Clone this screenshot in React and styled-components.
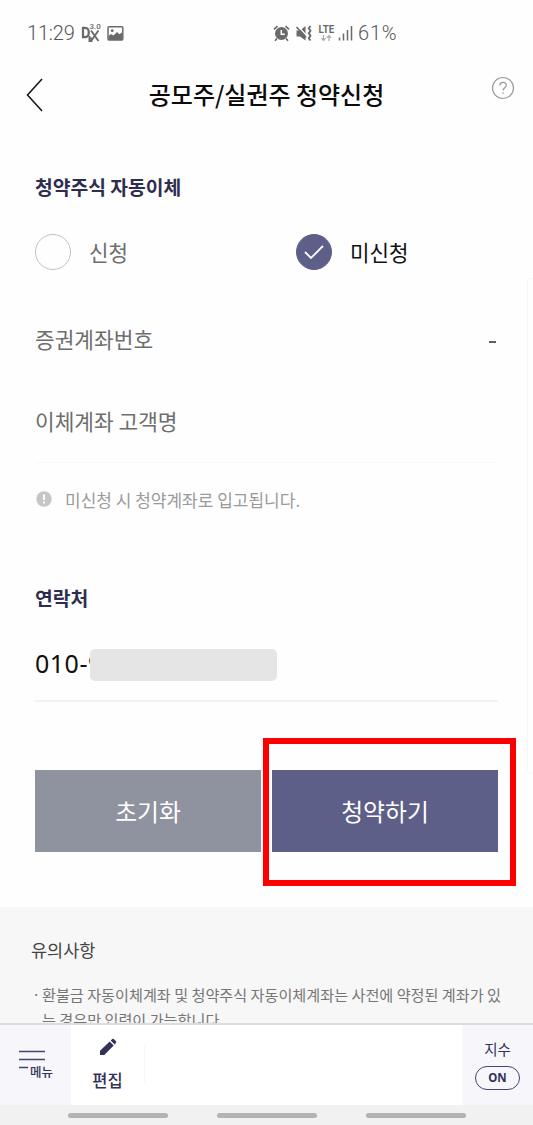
import {useState} from 'react';
import styled, { createGlobalStyle, css } from 'styled-components';

const GlobalStyle = createGlobalStyle`
  * {
    box-sizing: border-box;
  }

  body {
    margin: 0;
    background-color: #fefefe;
    font-family: "Noto Sans CJK KR", sans-serif;
  }

  button {
    font-family: inherit;
    border: none;
    padding: 0;
    background: none;
    cursor: pointer;
  }
`;

const Container = styled.div`
  position: relative;
  display: flex;
  flex-direction: column;
  width: 533px;
  height: 1125px;
  overflow: hidden;
  background-color: #fefefe;
`;

const StatusBar = styled.div`
  display: flex;
  align-items: center;
  height: 66px;
  padding: 0 27px;
  color: #6a6a6a;
`;

const StatusGroup = styled.div`
  display: flex;
  align-items: center;
  width: ${props => props.$width};
`;

const StatusText = styled.span`
  font-family: Roboto, sans-serif;
  font-size: 20px;
  font-weight: 300;
  line-height: 24px;
  letter-spacing: ${props => props.$spacing || "0"};
  color: #555;
`;

const StatusIcon = styled.svg`
  display: block;
  flex: none;
  margin-left: ${props => props.$gap || "0"};
`;

const Header = styled.header`
  display: grid;
  grid-template-columns: 60px 1fr 60px;
  align-items: center;
  height: 58px;
`;

const BackButton = styled.button`
  display: flex;
  padding-left: 26px;
`;

const HelpButton = styled.button`
  display: flex;
  margin: -14px 0 0 18px;
`;

const Title = styled.h1`
  margin: -2px 0 0;
  font-size: 24px;
  font-weight: 500;
  line-height: 36px;
  text-align: center;
  white-space: nowrap;
  color: #0b0b0b;
`;

const Form = styled.main`
  display: flex;
  flex-direction: column;
  height: 783px;
  padding: 48px 35px 0;
`;

const Heading = styled.h2`
  margin: 0;
  font-size: 19.3px;
  font-weight: 700;
  line-height: 30px;
  color: #2e2d4f;
`;

const Options = styled.div`
  display: grid;
  grid-template-columns: 261px 1fr;
  margin-top: 32px;
`;

const Option = styled.button`
  display: flex;
  align-items: center;
  gap: 18px;
  height: 36px;
  font-size: 21.2px;
  line-height: 34px;
  color: ${props => props.$checked ? "#111" : "#6e6e6e"};
`;

const Radio = styled.span`
  display: flex;
  align-items: center;
  justify-content: center;
  width: 36px;
  height: 36px;
  border-radius: 50%;
  border: 1px solid #c2c2c2;
  ${props => props.$checked && css`
    border-color: #5d5f88;
    background-color: #5d5f88;
  `}
`;

const Field = styled.div`
  display: flex;
  align-items: center;
  justify-content: space-between;
  height: 40px;
  margin-top: ${props => props.$top};
  font-size: 21.4px;
  line-height: 40px;
  color: #6e6e6e;
`;

const FieldLabel = styled.span`
  padding-bottom: 4px;
`;

const Dash = styled.span`
  width: 7px;
  height: 2px;
  margin: 2px 2px 0 0;
  background-color: #606060;
`;

const Divider = styled.div`
  flex: none;
  height: ${props => props.$strong ? "2px" : "1px"};
  margin-top: ${props => props.$strong ? "18px" : "19px"};
  background-color: ${props => props.$strong ? "#f1f1f1" : "#f8f8f8"};
`;

const Hint = styled.p`
  display: flex;
  align-items: center;
  gap: 13px;
  height: 30px;
  margin: 22px 0 68px;
  padding-left: 1px;
  font-size: 17px;
  line-height: 30px;
  color: #9a9a9a;
`;

const HintIcon = styled(StatusIcon)`
  margin-top: -3px;
`;

const Phone = styled.div`
  display: flex;
  align-items: center;
  height: 34px;
  margin-top: 35px;
`;

const PhoneText = styled.span`
  flex: none;
  width: 55px;
  padding-bottom: 4px;
  white-space: nowrap;
  font-family: "Noto Sans", sans-serif;
  font-size: 25px;
  line-height: 34px;
  letter-spacing: 0.5px;
  color: #111;
`;

/* covers the digits that follow the prefix */
const Mask = styled.span`
  position: relative;
  width: 187px;
  height: 32px;
  border-radius: 5px;
  background-color: #e5e5e5;
`;

const Actions = styled.div`
  display: grid;
  grid-template-columns: 226px 226px;
  gap: 11px;
  margin-top: 68px;
`;

const ActionWrapper = styled.div`
  position: relative;
`;

const Action = styled.button`
  display: block;
  width: 100%;
  height: 82px;
  font-size: 23.8px;
  line-height: 82px;
  color: #fff;
  background-color: ${props => props.$primary ? "#5d5f88" : "#8f929f"};
`;

const Highlight = styled.div`
  position: absolute;
  top: -32px;
  left: -9px;
  width: 253px;
  height: 148px;
  border: 6px solid #fe0000;
  pointer-events: none;
`;

const Notice = styled.section`
  flex: 1;
  min-height: 0;
  overflow: hidden;
  padding: 30px 24px 0 31px;
  background-color: #f7f7f7;
`;

const NoticeTitle = styled.h3`
  margin: 0 0 19px;
  font-size: 17.5px;
  font-weight: 400;
  line-height: 26px;
  color: #444;
`;

const NoticeText = styled.p`
  display: flex;
  margin: 0;
  font-size: 15.15px;
  line-height: 25px;
  color: #757575;
`;

const Bullet = styled.span`
  flex: none;
  width: 11px;
  padding-left: 1px;
`;

const BottomNav = styled.nav`
  display: flex;
  flex: none;
  height: 82px;
  border-top: 2px solid #dcdcdc;
  background-color: #fff;
  color: #32315a;
`;

const MenuButton = styled.button`
  display: flex;
  align-items: flex-start;
  width: 71px;
  padding: 25px 0 0 19px;
  background-color: #f7f7fb;
  color: inherit;
`;

const MenuLabel = styled.span`
  margin: 11px 0 0 -15px;
  font-size: 12.5px;
  font-weight: 500;
  line-height: 22px;
`;

const EditButton = styled.button`
  display: flex;
  flex-direction: column;
  align-items: center;
  width: 73px;
  padding-top: 13px;
  color: inherit;
`;

const EditLabel = styled.span`
  margin-top: 12px;
  font-size: 16.5px;
  font-weight: 500;
  line-height: 24px;
`;

const NavDivider = styled.span`
  width: 1px;
  height: 38px;
  margin-top: 20px;
  background-color: #f6f6f6;
`;

const IndexButton = styled.button`
  display: flex;
  flex-direction: column;
  align-items: center;
  width: 71px;
  margin-left: auto;
  padding-top: 13px;
  background-color: #f7f7fb;
  color: inherit;
`;

const IndexLabel = styled.span`
  font-size: 14.5px;
  line-height: 22px;
`;

const Toggle = styled.span`
  width: 45px;
  height: 24px;
  margin-top: 6px;
  border: 1.5px solid #45446a;
  border-radius: 12px;
  font-family: "Noto Sans", sans-serif;
  font-size: 11.5px;
  font-weight: 700;
  line-height: 22px;
  text-align: center;
`;

const GestureBar = styled.div`
  display: flex;
  flex: none;
  align-items: center;
  justify-content: center;
  gap: 49px;
  height: 20px;
  background-color: #f1f1f1;
`;

const Handle = styled.span`
  width: 100px;
  height: 5px;
  border-radius: 3px;
  background-color: #b3b3b3;
`;

const EdgePanel = styled.div`
  position: absolute;
  top: 278px;
  right: -4px;
  width: 10px;
  height: 496px;
  border: 1px solid #f7f7f7;
  border-radius: 4px;
`;

const DexIcon = () => (
  <StatusIcon $gap="6px" width="20" height="20" viewBox="0 0 20 20">
    <path d="M2 4.800v9.400h1.600c2.900 0 4.200-1.600 4.200-4.700s-1.300-4.700-4.200-4.700z" fill="none" stroke="currentColor" strokeWidth="2.200" />
    <path d="M10 7.500l7.500 10.500M17.500 7.500L10 18M8.500 13v5h3M8.500 15.500h2.500" fill="none" stroke="currentColor" strokeWidth="1.900" />
    <text x="8.500" y="6.200" fontFamily="Roboto" fontSize="8" fontWeight="500" fill="currentColor">3.0</text>
  </StatusIcon>
);

const PictureIcon = () => (
  <StatusIcon $gap="6px" width="17" height="15" viewBox="0 0 17 15">
    <rect x="1" y="0.800" width="14.800" height="13.200" rx="1" fill="none" stroke="currentColor" strokeWidth="1.500" />
    <circle cx="5.200" cy="4.700" r="1.400" fill="currentColor" />
    <path d="M1.500 10l2.500-2 2.500 1.600 3.500-3.600 2.300 2.300L15 6.500V14H1.500z" fill="currentColor" />
  </StatusIcon>
);

const AlarmIcon = () => (
  <StatusIcon width="17" height="17" viewBox="0 0 17 17">
    <circle cx="8.500" cy="8.500" r="6.500" fill="currentColor" />
    <path d="M1 4.300L4.500 1.200M16 4.300l-3.500-3.100M4 13.500l-2 2.300M13 13.500l2 2.300" stroke="currentColor" strokeWidth="1.700" />
    <path d="M8.300 5v4.200h3.500" fill="none" stroke="#fefefe" strokeWidth="1.500" />
  </StatusIcon>
);

const MuteIcon = () => (
  <StatusIcon $gap="5px" width="18" height="17" viewBox="0 0 18 17">
    <path d="M1.500 5.500h3.500L10.500 1v14.500L5 11.500H1.500z" fill="currentColor" />
    <path d="M3 1.200L12 11" stroke="#fefefe" strokeWidth="1.200" />
    <path d="M1.500 2L11 12.500" stroke="currentColor" strokeWidth="1.700" />
    <path d="M15.500 1l-1.700 2.300 1.700 2.500-1.700 2.500 1.700 2.500-1.700 2.400 1.700 2.300" fill="none" stroke="currentColor" strokeWidth="1.900" />
  </StatusIcon>
);

const LteIcon = () => (
  <StatusIcon $gap="5px" width="18" height="19" viewBox="0 0 18 19">
    <text x="0.500" y="8.800" fontFamily="Roboto" fontSize="10" fontWeight="700" textLength="15.800" lengthAdjust="spacingAndGlyphs" fill="currentColor">LTE</text>
    <path d="M5.500 11v5.500M3.300 14.200l2.200 2.300 2.200-2.300M11 17v-5.500M8.800 13.800L11 11.500l2.200 2.300" fill="none" stroke="#aaa" strokeWidth="1.200" />
  </StatusIcon>
);

const SignalIcon = () => (
  <StatusIcon $gap="2px" width="15" height="16" viewBox="0 0 15 16">
    <path d="M1.500 12.500v3M5.500 8.500v7M9.500 5v10.500M13.500 1v14.500" stroke="currentColor" strokeWidth="1.500" />
  </StatusIcon>
);

const App = () => {

  const [applied, setApplied] = useState(false);

  const options = [
    { label: "신청", value: true },
    { label: "미신청", value: false },
  ];

  return (
    <>
      <GlobalStyle />
      <Container>
        <StatusBar>
          <StatusGroup $width="246px">
            <StatusText $spacing="-0.2px">11:29</StatusText>
            <DexIcon />
            <PictureIcon />
          </StatusGroup>
          <StatusGroup>
            <AlarmIcon />
            <MuteIcon />
            <LteIcon />
            <SignalIcon />
            <StatusIcon as="span" $gap="5px">
              <StatusText $spacing="0.8px">61%</StatusText>
            </StatusIcon>
          </StatusGroup>
        </StatusBar>

        <Header>
          <BackButton aria-label="뒤로">
            <svg width="18" height="36" viewBox="0 0 18 36">
              <path d="M16 2L1.500 18 16 34" fill="none" stroke="#111" strokeWidth="1.500" />
            </svg>
          </BackButton>
          <Title>공모주/실권주 청약신청</Title>
          <HelpButton aria-label="도움말">
            <svg width="24" height="24" viewBox="0 0 24 24" fill="none" stroke="#9b9b9b" strokeWidth="1.200">
              <circle cx="12" cy="12" r="10.500" />
              <path d="M8.900 9.500c0-4 6.400-4 6.400-.3 0 2.500-3.200 2.600-3.200 5.300M12.100 16.200v1.600" strokeWidth="1.300" />
            </svg>
          </HelpButton>
        </Header>

        <Form>
          <Heading>청약주식 자동이체</Heading>
          <Options>
            {options.map((item) => {
              const checked = applied === item.value;
              return (
                <Option key={item.label} $checked={checked} onClick={() => setApplied(item.value)}>
                  <Radio $checked={checked}>
                    {checked && (
                      <svg width="20" height="16" viewBox="0 0 20 16">
                        <path d="M1 8l6 6L19 2" fill="none" stroke="#fff" strokeWidth="1.800" />
                      </svg>
                    )}
                  </Radio>
                  {item.label}
                </Option>
              );
            })}
          </Options>
          <Field $top="51px">
            <FieldLabel>증권계좌번호</FieldLabel>
            <Dash />
          </Field>
          <Field $top="42px">
            <FieldLabel>이체계좌 고객명</FieldLabel>
          </Field>
          <Divider />
          <Hint>
            <HintIcon width="16" height="16" viewBox="0 0 16 16">
              <circle cx="8" cy="8" r="7.700" fill="#c6c6c6" />
              <path d="M8 3.500v5.500M8 10.500v2" stroke="#fff" strokeWidth="2" />
            </HintIcon>
            미신청 시 청약계좌로 입고됩니다.
          </Hint>

          <Heading>연락처</Heading>
          <Phone>
            <PhoneText>010-9</PhoneText>
            <Mask />
          </Phone>
          <Divider $strong />

          <Actions>
            <Action>초기화</Action>
            <ActionWrapper>
              <Action $primary>청약하기</Action>
              <Highlight />
            </ActionWrapper>
          </Actions>
        </Form>

        <Notice>
          <NoticeTitle>유의사항</NoticeTitle>
          <NoticeText>
            <Bullet>·</Bullet>
            <span>
              환불금 자동이체계좌 및 청약주식 자동이체계좌는 사전에 약정된 계좌가 있<br />
              는 경우만 입력이 가능합니다
            </span>
          </NoticeText>
        </Notice>

        <BottomNav>
          <MenuButton>
            <svg width="26" height="19" viewBox="0 0 26 19">
              <path d="M0 1.500h26M0 9.500h26M0 17.500h9" stroke="#45446a" strokeWidth="1.500" />
            </svg>
            <MenuLabel>메뉴</MenuLabel>
          </MenuButton>
          <EditButton>
            <svg width="18" height="18" viewBox="0 0 18 18" fill="#32315a">
              <path d="M1 17v-4.300L10.700 3.500l4 4L5.300 17zM11.700 2.500L13.300 1q.7-.6 1.400 0L17 3.300q.6.700 0 1.400l-1.400 1.700z" />
            </svg>
            <EditLabel>편집</EditLabel>
          </EditButton>
          <NavDivider />
          <IndexButton>
            <IndexLabel>지수</IndexLabel>
            <Toggle>ON</Toggle>
          </IndexButton>
        </BottomNav>
        <GestureBar>
          <Handle />
          <Handle />
          <Handle />
        </GestureBar>
        <EdgePanel />
      </Container>
    </>
  );
}

export default App;
